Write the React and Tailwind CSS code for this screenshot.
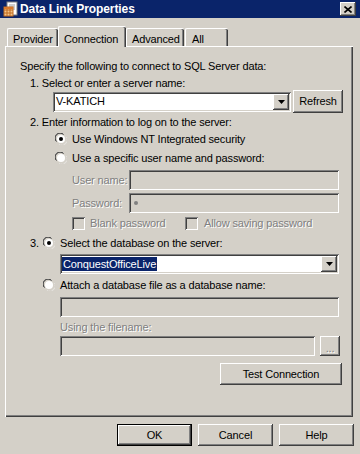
import React from 'react';

const raised =
  'shadow-[inset_-1px_-1px_#404040,inset_1px_1px_#ffffff,inset_-2px_-2px_#808080,inset_2px_2px_#d4d0c8]';
const sunken =
  'shadow-[inset_1px_1px_#808080,inset_-1px_-1px_#ffffff,inset_2px_2px_#404040,inset_-2px_-2px_#d4d0c8]';
const disabledText = 'text-[#808080] [text-shadow:1px_1px_0_#ffffff]';

const Radio = ({ checked }) => (
  <svg width="12" height="12" viewBox="0 0 12 12" className="shrink-0">
    <path d="M0.5 8 A5.5 5.5 0 0 1 8 0.5" fill="none" stroke="#808080" />
    <path d="M1.6 8.6 A4.5 4.5 0 0 1 8.6 1.6" fill="none" stroke="#404040" />
    <circle cx="6" cy="6" r="4" fill="#ffffff" />
    <path d="M11.5 4 A5.5 5.5 0 0 1 4 11.5" fill="none" stroke="#ffffff" />
    <path d="M10.4 3.4 A4.5 4.5 0 0 1 3.4 10.4" fill="none" stroke="#d4d0c8" />
    {checked && <circle cx="6" cy="6" r="2" fill="#000000" />}
  </svg>
);

const Checkbox = () => (
  <div className={`w-[13px] h-[13px] shrink-0 bg-[#d4d0c8] ${sunken}`} />
);

const DropButton = () => (
  <div className={`w-[16px] h-[16px] bg-[#d4d0c8] flex items-center justify-center ${raised}`}>
    <svg width="7" height="4" viewBox="0 0 7 4">
      <path d="M0 0 H7 L3.5 4 Z" fill="#000000" />
    </svg>
  </div>
);

const Button = ({ children, className = '', isDefault }) => (
  <div
    className={`flex items-center justify-center bg-[#d4d0c8] text-black ${
      isDefault ? 'border border-black' : ''
    } ${className}`}
  >
    <div className={`w-full h-full flex items-center justify-center ${raised}`}>{children}</div>
  </div>
);

const Tab = ({ label, selected, className = '' }) => (
  <div
    className={`relative flex items-start bg-[#d4d0c8] border-l border-t border-white rounded-tl-[2px] rounded-tr-[2px] shadow-[inset_-1px_0_#404040,inset_-2px_0_#808080] ${
      selected ? 'h-[21px] z-10 -mb-[1px] pt-[4px]' : 'h-[18px] pt-[2px]'
    } ${className}`}
  >
    {label}
  </div>
);

const TitleIcon = () => (
  <svg width="16" height="16" viewBox="0 0 16 16" className="shrink-0">
    <rect x="4" y="1" width="10" height="13" fill="#ffffff" stroke="#7f7f7f" />
    <path d="M6 4 H12 M6 6 H12 M6 8 H12" stroke="#9a9a9a" />
    <rect x="1" y="6" width="9" height="9" fill="#f2c48a" stroke="#c06a1e" />
    <path d="M1 9 H10 M1 12 H10 M4 6 V15 M7 6 V15" stroke="#c06a1e" />
    <rect x="1" y="6" width="9" height="2" fill="#d9782a" />
  </svg>
);

export default function App() {
  return (
    <div
      className="w-[360px] h-[454px] bg-[#d4d0c8] text-[11px] tracking-[-0.15px] text-black overflow-hidden select-none"
      style={{ fontFamily: '"Liberation Sans", Arial, sans-serif' }}
    >
      {/* Title bar */}
      <div className="h-[18px] bg-[#0a246a] flex items-center pl-[3px] pr-[4px]">
        <TitleIcon />
        <div className="ml-[1px] text-white font-bold text-[12px] leading-none tracking-[-0.1px]">
          Data Link Properties
        </div>
        <div className="ml-auto">
          <div className={`w-[16px] h-[14px] bg-[#d4d0c8] flex items-center justify-center ${raised}`}>
            <svg width="8" height="7" viewBox="0 0 8 7">
              <path d="M0.5 0.5 L7.5 6.5 M7.5 0.5 L0.5 6.5" stroke="#000000" strokeWidth="1.6" />
            </svg>
          </div>
        </div>
      </div>

      {/* Tabs */}
      <div className="h-[28px] flex items-end pl-[7px]">
        <Tab label="Provider" className="w-[51px] pl-[5px]" />
        <Tab label="Connection" selected className="w-[68px] pl-[5px]" />
        <Tab label="Advanced" className="w-[58px] pl-[5px]" />
        <Tab label="All" className="w-[43px] ml-[1px] pl-[6px]" />
      </div>

      {/* Panel */}
      <div className="ml-[5px] w-[348px] h-[371px] border-l border-t border-white shadow-[inset_-1px_-1px_#404040,inset_-2px_-2px_#808080] flex flex-col">
        <div className="mt-[12px] h-[14px] flex items-center pl-[14px]">
          Specify the following to connect to SQL Server data:
        </div>
        <div className="mt-[3px] h-[14px] flex items-center pl-[24px]">1. Select or enter a server name:</div>
        <div className="h-[23px] flex items-center pl-[47px]">
          <div className={`w-[238px] h-[20px] bg-white flex items-center justify-between pl-[3px] pr-[2px] ${sunken}`}>
            <span>V-KATICH</span>
            <DropButton />
          </div>
          <Button className="ml-[2px] w-[50px] h-[23px]">Refresh</Button>
        </div>
        <div className="mt-[2px] h-[14px] flex items-center pl-[24px]">
          2. Enter information to log on to the server:
        </div>
        <div className="mt-[3px] h-[14px] flex items-center pl-[49px] gap-[5px]">
          <Radio checked />
          <span>Use Windows NT Integrated security</span>
        </div>
        <div className="mt-[5px] h-[14px] flex items-center pl-[49px] gap-[5px]">
          <Radio />
          <span>Use a specific user name and password:</span>
        </div>
        <div className="mt-[5px] h-[20px] flex items-center pl-[66px]">
          <span className={`w-[57px] ${disabledText}`}>User name:</span>
          <div className={`w-[210px] h-[20px] bg-[#d4d0c8] ${sunken}`} />
        </div>
        <div className="mt-[3px] h-[20px] flex items-center pl-[66px]">
          <span className={`w-[57px] ${disabledText}`}>Password:</span>
          <div className={`w-[210px] h-[20px] bg-[#d4d0c8] flex items-center pl-[5px] ${sunken}`}>
            <div className="w-[4px] h-[4px] rounded-full bg-[#808080]" />
          </div>
        </div>
        <div className="mt-[3px] h-[14px] flex items-center pl-[66px]">
          <div className="w-[113px] flex items-center gap-[5px]">
            <Checkbox />
            <span className={disabledText}>Blank password</span>
          </div>
          <div className="flex items-center gap-[6px]">
            <Checkbox />
            <span className={disabledText}>Allow saving password</span>
          </div>
        </div>
        <div className="mt-[6px] h-[14px] flex items-center pl-[24px]">
          <span className="w-[13px]">3.</span>
          <Radio checked />
          <span className="ml-[5px]">Select the database on the server:</span>
        </div>
        <div className="mt-[4px] h-[20px] flex items-center pl-[54px]">
          <div className={`w-[279px] h-[20px] bg-white flex items-center justify-between pl-[2px] pr-[2px] ${sunken}`}>
            <span className="bg-[#0a246a] text-white px-[1px] leading-[14px]">ConquestOfficeLive</span>
            <DropButton />
          </div>
        </div>
        <div className="mt-[4px] h-[14px] flex items-center pl-[37px] gap-[5px]">
          <Radio />
          <span>Attach a database file as a database name:</span>
        </div>
        <div className="mt-[5px] h-[20px] flex items-center pl-[54px]">
          <div className={`w-[279px] h-[20px] bg-[#d4d0c8] ${sunken}`} />
        </div>
        <div className="mt-[3px] h-[14px] flex items-center pl-[54px]">
          <span className={disabledText}>Using the filename:</span>
        </div>
        <div className="mt-[2px] h-[20px] flex items-center pl-[54px]">
          <div className={`w-[255px] h-[20px] bg-[#d4d0c8] ${sunken}`} />
          <Button className="ml-[5px] w-[20px] h-[20px]">
            <span className={`${disabledText} leading-none pt-[4px]`}>...</span>
          </Button>
        </div>
        <div className="mt-[7px] h-[22px] flex items-center pl-[214px]">
          <Button className="w-[122px] h-[22px]">Test Connection</Button>
        </div>
      </div>

      {/* Bottom buttons */}
      <div className="mt-[7px] h-[22px] flex items-center pl-[117px]">
        <Button isDefault className="w-[75px] h-[22px]">OK</Button>
        <Button className="ml-[6px] w-[75px] h-[22px]">Cancel</Button>
        <Button className="ml-[6px] w-[75px] h-[22px]">Help</Button>
      </div>
    </div>
  );
}
